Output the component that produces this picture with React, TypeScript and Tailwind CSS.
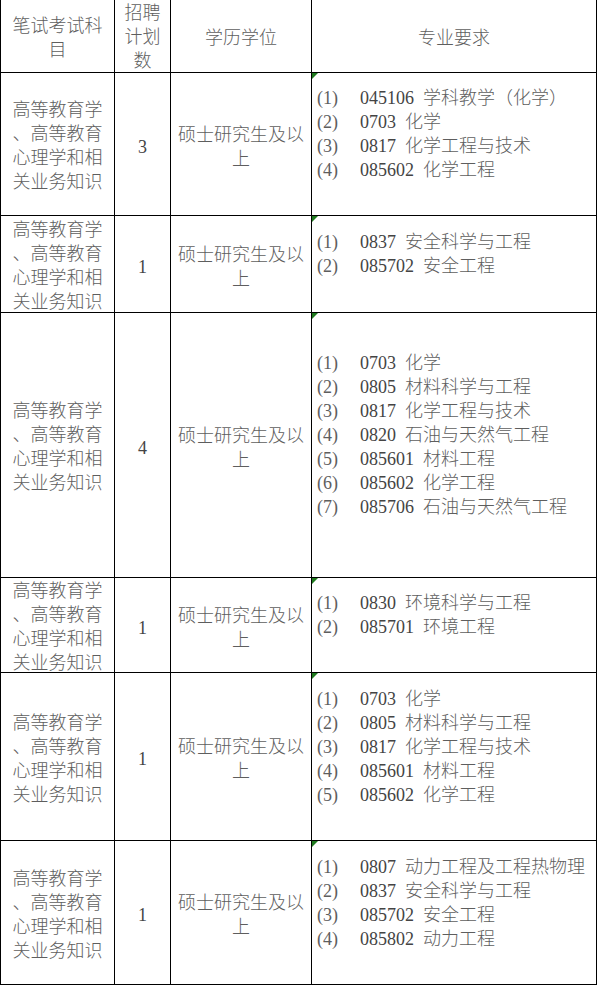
import React from "react";

type Row = {
  h: string;
  count: string;
  majors: [string, string][];
};

const rows: Row[] = [
  {
    h: "h-[143px]",
    count: "3",
    majors: [
      ["045106", "学科教学（化学）"],
      ["0703", "化学"],
      ["0817", "化学工程与技术"],
      ["085602", "化学工程"],
    ],
  },
  {
    h: "h-[97px]",
    count: "1",
    majors: [
      ["0837", "安全科学与工程"],
      ["085702", "安全工程"],
    ],
  },
  {
    h: "h-[265px]",
    count: "4",
    majors: [
      ["0703", "化学"],
      ["0805", "材料科学与工程"],
      ["0817", "化学工程与技术"],
      ["0820", "石油与天然气工程"],
      ["085601", "材料工程"],
      ["085602", "化学工程"],
      ["085706", "石油与天然气工程"],
    ],
  },
  {
    h: "h-[95px]",
    count: "1",
    majors: [
      ["0830", "环境科学与工程"],
      ["085701", "环境工程"],
    ],
  },
  {
    h: "h-[168px]",
    count: "1",
    majors: [
      ["0703", "化学"],
      ["0805", "材料科学与工程"],
      ["0817", "化学工程与技术"],
      ["085601", "材料工程"],
      ["085602", "化学工程"],
    ],
  },
  {
    h: "h-[144px]",
    count: "1",
    majors: [
      ["0807", "动力工程及工程热物理"],
      ["0837", "安全科学与工程"],
      ["085702", "安全工程"],
      ["085802", "动力工程"],
    ],
  },
];

const font = {
  fontFamily: '"Liberation Serif", "Noto Sans CJK SC", serif',
};

export default function App() {
  return (
    <div
      className="w-[598px] h-[985px] bg-white text-[18px] leading-[24px] font-light text-[#5e5e5e] overflow-hidden"
      style={font}
    >
      <div className="w-[597px] border-l border-black">
        {/* header */}
        <div className="flex h-[73px] border-b border-black">
          <div className="w-[114px] border-r border-black flex flex-col items-center justify-center pt-[4px]">
            <div>笔试考试科</div>
            <div>目</div>
          </div>
          <div className="w-[56px] border-r border-black flex flex-col items-center justify-center pt-[2px]">
            <div>招聘</div>
            <div>计划</div>
            <div>数</div>
          </div>
          <div className="w-[141px] border-r border-black flex items-center justify-center pt-[4px]">
            学历学位
          </div>
          <div className="w-[285px] border-r border-black flex items-center justify-center pt-[4px]">
            专业要求
          </div>
        </div>
        {rows.map((r, i) => (
          <div key={i} className={`flex border-b border-black ${r.h}`}>
            <div className="w-[114px] border-r border-black flex flex-col items-center justify-center pt-[4px] whitespace-nowrap">
              <div>高等教育学</div>
              <div>、高等教育</div>
              <div>心理学和相</div>
              <div>关业务知识</div>
            </div>
            <div className="w-[56px] border-r border-black flex items-center justify-center pt-[5px] text-[#444444]">
              {r.count}
            </div>
            <div className="w-[141px] border-r border-black flex flex-col items-center justify-center pt-[5px]">
              <div>硕士研究生及以</div>
              <div>上</div>
            </div>
            <div className="relative w-[285px] border-r border-black flex flex-col justify-center pl-[5px] pb-[20px] whitespace-nowrap">
              <div className="absolute left-0 top-0 w-0 h-0 border-t-[6px] border-r-[6px] border-t-[#1f7a1f] border-r-transparent" />
              {r.majors.map(([code, name], j) => (
                <div key={j} className="flex">
                  <span className="inline-block w-[43px]">({j + 1})</span>
                  <span className="text-[#444444]">{code}</span>
                  <span className="ml-[9px]">{name}</span>
                </div>
              ))}
            </div>
          </div>
        ))}
      </div>
    </div>
  );
}
